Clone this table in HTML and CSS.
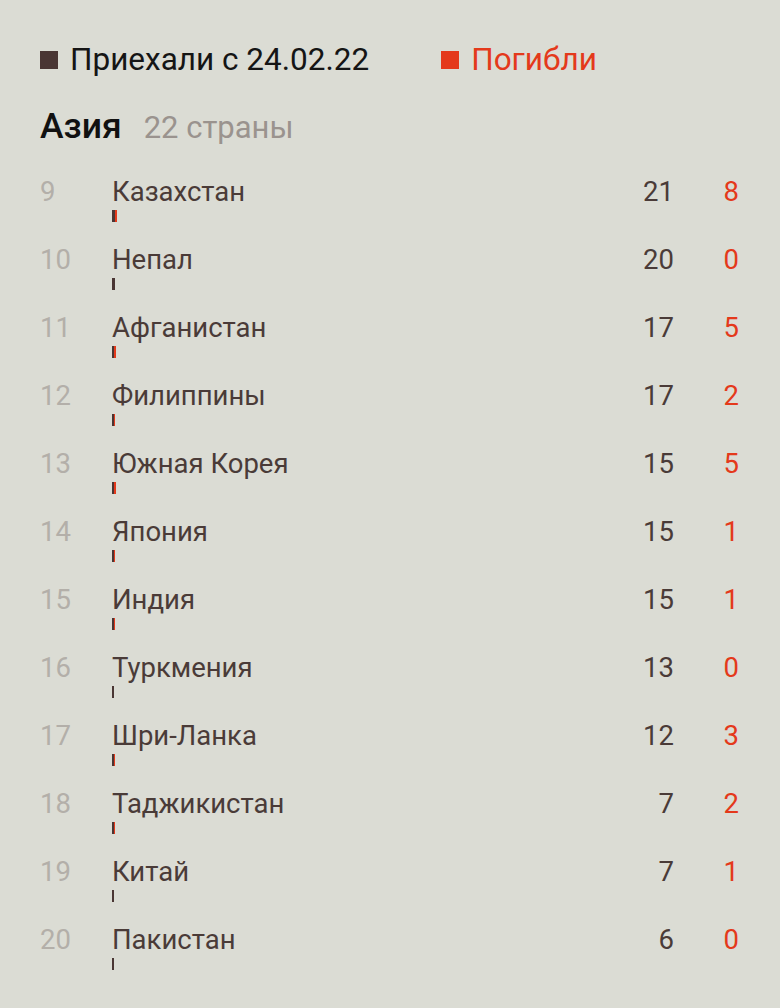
FILE: index.html
```html
<!DOCTYPE html>
<html lang="ru">
<head>
<meta charset="utf-8">
<link rel="stylesheet" href="styles.css">
</head>
<body>
<div class="page">
  <div class="legend">
    <div class="legend-item"><span class="sq sq-dark"></span><span class="legend-text">Приехали с 24.02.22</span></div>
    <div class="legend-item red"><span class="sq sq-red"></span><span class="legend-text">Погибли</span></div>
  </div>
  <div class="region">
    <span class="region-name">Азия</span>
    <span class="region-count">22 страны</span>
  </div>
  <div class="rows">
    <div class="row"><span class="rank">9</span><div class="name-cell"><span class="name">Казахстан</span><div class="bar"><span class="b-dark" style="width:3px"></span><span class="b-red" style="width:2px"></span></div></div><span class="arr">21</span><span class="dead">8</span></div>
    <div class="row"><span class="rank">10</span><div class="name-cell"><span class="name">Непал</span><div class="bar"><span class="b-dark" style="width:3px"></span></div></div><span class="arr">20</span><span class="dead">0</span></div>
    <div class="row"><span class="rank">11</span><div class="name-cell"><span class="name">Афганистан</span><div class="bar"><span class="b-dark" style="width:2px"></span><span class="b-red" style="width:2px"></span></div></div><span class="arr">17</span><span class="dead">5</span></div>
    <div class="row"><span class="rank">12</span><div class="name-cell"><span class="name">Филиппины</span><div class="bar"><span class="b-dark" style="width:2px"></span><span class="b-red" style="width:1px"></span></div></div><span class="arr">17</span><span class="dead">2</span></div>
    <div class="row"><span class="rank">13</span><div class="name-cell"><span class="name">Южная Корея</span><div class="bar"><span class="b-dark" style="width:2px"></span><span class="b-red" style="width:2px"></span></div></div><span class="arr">15</span><span class="dead">5</span></div>
    <div class="row"><span class="rank">14</span><div class="name-cell"><span class="name">Япония</span><div class="bar"><span class="b-dark" style="width:2px"></span><span class="b-red" style="width:1px"></span></div></div><span class="arr">15</span><span class="dead">1</span></div>
    <div class="row"><span class="rank">15</span><div class="name-cell"><span class="name">Индия</span><div class="bar"><span class="b-dark" style="width:2px"></span><span class="b-red" style="width:1px"></span></div></div><span class="arr">15</span><span class="dead">1</span></div>
    <div class="row"><span class="rank">16</span><div class="name-cell"><span class="name">Туркмения</span><div class="bar"><span class="b-dark" style="width:2px"></span></div></div><span class="arr">13</span><span class="dead">0</span></div>
    <div class="row"><span class="rank">17</span><div class="name-cell"><span class="name">Шри-Ланка</span><div class="bar"><span class="b-dark" style="width:2px"></span><span class="b-red" style="width:1px"></span></div></div><span class="arr">12</span><span class="dead">3</span></div>
    <div class="row"><span class="rank">18</span><div class="name-cell"><span class="name">Таджикистан</span><div class="bar"><span class="b-dark" style="width:2px"></span><span class="b-red" style="width:1px"></span></div></div><span class="arr">7</span><span class="dead">2</span></div>
    <div class="row"><span class="rank">19</span><div class="name-cell"><span class="name">Китай</span><div class="bar"><span class="b-dark" style="width:2px"></span></div></div><span class="arr">7</span><span class="dead">1</span></div>
    <div class="row"><span class="rank">20</span><div class="name-cell"><span class="name">Пакистан</span><div class="bar"><span class="b-dark" style="width:2px"></span></div></div><span class="arr">6</span><span class="dead">0</span></div>
  </div>
</div>
</body>
</html>
```
FILE: styles.css
```css
html, body {
  margin: 0;
  padding: 0;
  background: #dbdcd4;
}
body {
  font-family: Roboto, "Liberation Sans", sans-serif;
  color: #4a3b38;
}
.page {
  padding: 43px 41px 0 40px;
}
.legend {
  display: flex;
  align-items: center;
  gap: 72px;
  font-size: 31.5px;
  line-height: 34px;
  color: #151515;
}
.legend-item {
  display: flex;
  align-items: center;
  gap: 12px;
}
.legend-item.red {
  color: #e4391b;
}
.sq {
  display: block;
  width: 18px;
  height: 18px;
}
.sq-dark { background: #4a3634; }
.sq-red { background: #e4391b; }
.region {
  margin-top: 31px;
  display: flex;
  align-items: baseline;
  gap: 22px;
  line-height: 36px;
}
.region-name {
  font-size: 35.5px;
  font-weight: 500;
  color: #111;
}
.region-count {
  font-size: 31px;
  color: #9a938e;
}
.rows {
  margin-top: 32px;
}
.row {
  display: grid;
  grid-template-columns: 72px 1fr 70px 65px;
  align-items: start;
  height: 68px;
  font-size: 27.5px;
  line-height: 28px;
}
.rank {
  color: #b3afa9;
}
.name-cell {
  display: flex;
  flex-direction: column;
  align-items: flex-start;
}
.bar {
  display: flex;
  margin-top: 4px;
  height: 12px;
}
.b-dark { background: #4a3634; height: 100%; }
.b-red { background: #e4391b; height: 100%; }
.arr, .dead {
  text-align: right;
}
.dead {
  color: #e4391b;
}
```
